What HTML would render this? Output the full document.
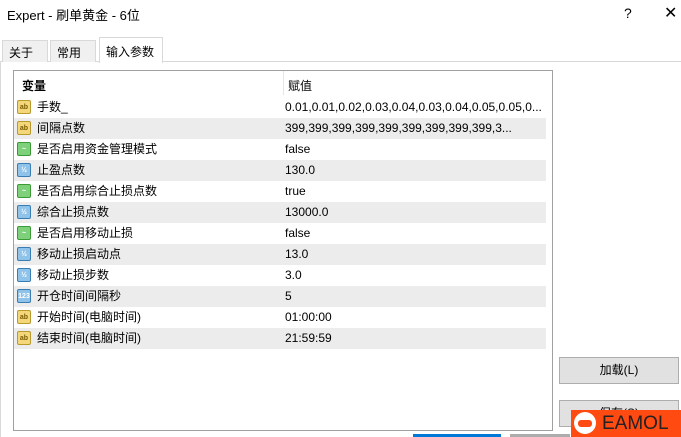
<!DOCTYPE html><html><head><meta charset="utf-8"><style>
*{margin:0;padding:0;box-sizing:border-box}
body{width:681px;height:437px;background:#fff;font-family:"Liberation Sans","Noto Sans CJK SC",sans-serif;font-size:12px;color:#000;position:relative;overflow:hidden}
.a{position:absolute}
.tab{position:absolute;top:40px;height:22px;border:1px solid #d9d9d9;border-bottom:none;background:#f0f0f0;padding:3px 6px;font-size:12px}
.row{position:absolute;left:14px;width:532px;height:21px;line-height:21px}
.row.g{background:#ececec}
.ic{position:absolute;left:3px;top:3px;width:14px;height:14px;border-radius:2px;font-size:7px;line-height:14px;text-align:center;font-weight:bold}
.y{background:#f3d77a;border:1px solid #b99a2f;color:#7a5a00}
.gr{background:#7fd07a;border:1px solid #3a9a36;color:#fff}
.b{background:#8fc3ea;border:1px solid #3a7db3;color:#fff}
.n{position:absolute;left:23px}
.v{position:absolute;left:271px}
.btn{position:absolute;left:559px;width:120px;height:27px;border:1px solid #adadad;background:#e1e1e1;text-align:center;line-height:25px}
</style></head><body>
<div class="a" style="left:7px;top:5px;font-size:13px">Expert - 刷单黄金 - 6位</div>
<div class="a" style="left:624px;top:5px;font-size:14px">?</div>
<div class="a" style="left:664px;top:3px;font-size:16px">✕</div>
<div class="a" style="left:0;top:61px;width:681px;height:376px;border-top:1px solid #d9d9d9;border-left:1px solid #d9d9d9;background:#fff"></div>
<div class="tab" style="left:2px;width:46px">关于</div>
<div class="tab" style="left:50px;width:46px">常用</div>
<div class="tab" style="left:99px;top:37px;height:26px;width:64px;background:#fff;padding-top:5px">输入参数</div>
<div class="a" style="left:13px;top:70px;width:540px;height:361px;border:1px solid #a0a0a0;background:#fff"></div>
<div class="a" style="left:283px;top:71px;width:1px;height:24px;background:#e5e5e5"></div>
<div class="a" style="left:22px;top:77px;font-weight:bold">变量</div>
<div class="a" style="left:288px;top:77px">赋值</div>
<div class="row" style="top:97px"><div class="ic y">ab</div><span class="n">手数_</span><span class="v">0.01,0.01,0.02,0.03,0.04,0.03,0.04,0.05,0.05,0...</span></div>
<div class="row g" style="top:118px"><div class="ic y">ab</div><span class="n">间隔点数</span><span class="v">399,399,399,399,399,399,399,399,399,3...</span></div>
<div class="row" style="top:139px"><div class="ic gr">~</div><span class="n">是否启用资金管理模式</span><span class="v">false</span></div>
<div class="row g" style="top:160px"><div class="ic b">½</div><span class="n">止盈点数</span><span class="v">130.0</span></div>
<div class="row" style="top:181px"><div class="ic gr">~</div><span class="n">是否启用综合止损点数</span><span class="v">true</span></div>
<div class="row g" style="top:202px"><div class="ic b">½</div><span class="n">综合止损点数</span><span class="v">13000.0</span></div>
<div class="row" style="top:223px"><div class="ic gr">~</div><span class="n">是否启用移动止损</span><span class="v">false</span></div>
<div class="row g" style="top:244px"><div class="ic b">½</div><span class="n">移动止损启动点</span><span class="v">13.0</span></div>
<div class="row" style="top:265px"><div class="ic b">½</div><span class="n">移动止损步数</span><span class="v">3.0</span></div>
<div class="row g" style="top:286px"><div class="ic b">123</div><span class="n">开仓时间间隔秒</span><span class="v">5</span></div>
<div class="row" style="top:307px"><div class="ic y">ab</div><span class="n">开始时间(电脑时间)</span><span class="v">01:00:00</span></div>
<div class="row g" style="top:328px"><div class="ic y">ab</div><span class="n">结束时间(电脑时间)</span><span class="v">21:59:59</span></div>
<div class="btn" style="top:357px">加载(L)</div>
<div class="btn" style="top:400px">保存(S)</div>
<div class="a" style="left:413px;top:434px;width:88px;height:3px;background:#0078d7"></div>
<div class="a" style="left:510px;top:434px;width:60px;height:3px;background:#adadad"></div>
<div class="a" style="left:571px;top:410px;width:110px;height:27px;background:#ff4a12"></div>
<div class="a" style="left:574px;top:412px;width:22px;height:22px;border-radius:50%;background:#fff"></div>
<div class="a" style="left:578px;top:420px;width:14px;height:7px;border-radius:3px;background:#ff4a12"></div>
<div class="a" style="left:602px;top:410px;font-size:19px;line-height:27px;color:#222">EAMOL</div>
</body></html>
